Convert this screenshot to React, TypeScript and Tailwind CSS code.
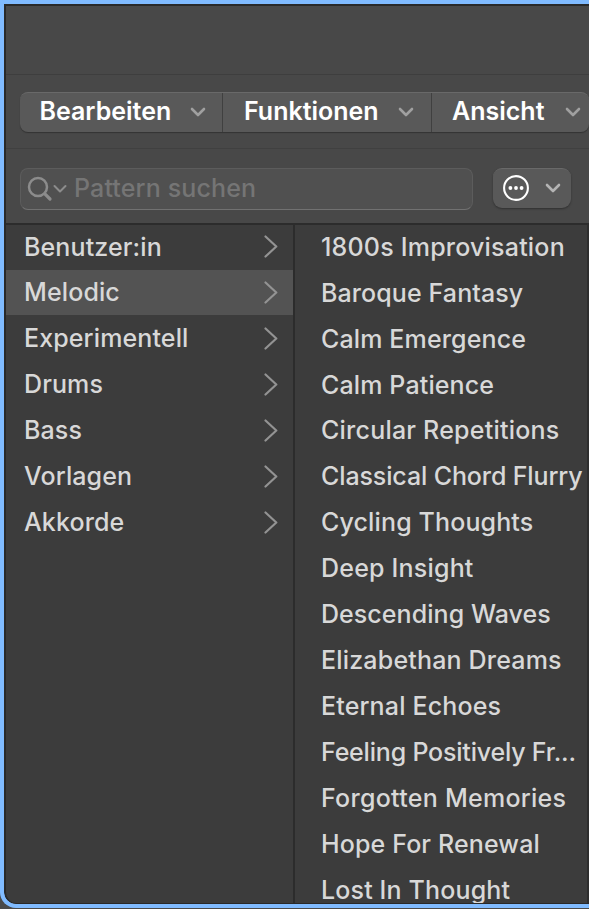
const menus = [
  { label: "Bearbeiten", box: "w-[203px] pl-[19.5px] border-r border-[#404040]", text: "w-[150.5px]" },
  { label: "Funktionen", box: "w-[209px] pl-[21px] border-r border-[#404040]", text: "w-[154px]" },
  { label: "Ansicht", box: "w-[158px] pl-[20px]", text: "w-[113px]" },
];

const categories = [
  "Benutzer:in",
  "Melodic",
  "Experimentell",
  "Drums",
  "Bass",
  "Vorlagen",
  "Akkorde",
];

const patterns = [
  { name: "1800s Improvisation", tracking: "tracking-[0.2px]" },
  { name: "Baroque Fantasy", tracking: "tracking-[0.1px]" },
  { name: "Calm Emergence", tracking: "tracking-[0.13px]" },
  { name: "Calm Patience", tracking: "tracking-[0.13px]" },
  { name: "Circular Repetitions", tracking: "tracking-[0.22px]" },
  { name: "Classical Chord Flurry", tracking: "tracking-[-0.12px]" },
  { name: "Cycling Thoughts", tracking: "tracking-[0.13px]" },
  { name: "Deep Insight", tracking: "tracking-[0.2px]" },
  { name: "Descending Waves", tracking: "tracking-[0.06px]" },
  { name: "Elizabethan Dreams", tracking: "tracking-[0.18px]" },
  { name: "Eternal Echoes", tracking: "tracking-[0.15px]" },
  { name: "Feeling Positively Fr...", tracking: "tracking-[-0.2px]" },
  { name: "Forgotten Memories", tracking: "tracking-[0.27px]" },
  { name: "Hope For Renewal", tracking: "tracking-[0.13px]" },
  { name: "Lost In Thought", tracking: "tracking-[0.15px]" },
];

function ChevronDown({ className }: { className: string }) {
  return (
    <svg width="16" height="10" viewBox="0 0 16 10" fill="none" stroke="currentColor" strokeWidth="2.6" strokeLinecap="round" strokeLinejoin="round" className={className}>
      <path d="M2 2l6 6 6-6" />
    </svg>
  );
}

function ChevronRight() {
  return (
    <svg width="14" height="24" viewBox="0 0 14 24" fill="none" stroke="#939393" strokeWidth="2.2" strokeLinecap="round" strokeLinejoin="round">
      <path d="M1.5 1.5L12.3 11.5 1.5 21.5" />
    </svg>
  );
}

export default function App() {
  return (
    <div className="h-[910px] w-[591px] overflow-hidden bg-white font-['Inter',sans-serif]">
      <div className="h-[909px] w-[589px] overflow-hidden bg-[#4a4a4a]">
        <div className="flex h-[908px] flex-col overflow-hidden rounded-bl-[16px] border-t-4 border-b-4 border-l-4 border-[#80bbff] bg-[#80bbff]">
          <div className="flex min-h-0 flex-1 flex-col overflow-hidden rounded-bl-[12px] border-t-2 border-b border-l-2 border-[#292929] bg-[#3c3c3c]">
            <div className="h-[69px] shrink-0 border-b border-[#3e3e3e] bg-[#484848]" />

            {/* Menu bar */}
            <div className="h-[74px] shrink-0 border-b border-[#404040] bg-[#484848] pt-[17px] pl-[14px]">
              <div className="flex h-10 w-[569px] overflow-hidden rounded-[8px] border-t border-[#696969] bg-[#595959] shadow-[0_1px_1px_#333]">
                {menus.map((m) => (
                  <div key={m.label} className={`flex shrink-0 items-center pb-px ${m.box}`}>
                    <span className={`shrink-0 text-[25px] font-semibold whitespace-nowrap text-white ${m.text}`}>
                      {m.label}
                    </span>
                    <ChevronDown className="text-[#a0a0a0]" />
                  </div>
                ))}
              </div>
            </div>

            {/* Search row */}
            <div className="flex h-[76px] shrink-0 border-b-2 border-[#2c2c2c] bg-[#484848] pt-[19px] pl-[14px]">
              <div className="flex h-[42px] w-[453px] items-center rounded-[8px] border border-t-[#5c5c5c] border-r-[#5c5c5c] border-b-[#717171] border-l-[#5c5c5c] bg-[#505050] pl-[6px]">
                <svg width="26" height="26" viewBox="0 0 26 26" fill="none" stroke="#8c8c8c" strokeLinecap="round">
                  <circle cx="11" cy="11" r="9" strokeWidth="2.5" />
                  <path d="M17.8 17.8l5.2 5.2" strokeWidth="3.2" />
                </svg>
                <svg width="14" height="10" viewBox="0 0 14 10" fill="none" stroke="#8c8c8c" strokeWidth="2" strokeLinecap="round" strokeLinejoin="round">
                  <path d="M1.5 2L7 7.5 12.5 2" />
                </svg>
                <span className="ml-[7px] text-[25px] font-medium tracking-[0.14px] whitespace-nowrap text-[#757575]">
                  Pattern suchen
                </span>
              </div>
              <div className="ml-5 flex h-10 w-[78px] items-center rounded-[9px] border-t border-[#696969] bg-[#595959] pb-px pl-[10px] shadow-[0_1px_2px_#303030]">
                <svg width="26" height="26" viewBox="0 0 26 26">
                  <circle cx="13" cy="13" r="11.9" fill="none" stroke="#fff" strokeWidth="2.1" />
                  <circle cx="7.4" cy="13" r="1.9" fill="#fff" />
                  <circle cx="13" cy="13" r="1.9" fill="#fff" />
                  <circle cx="18.6" cy="13" r="1.9" fill="#fff" />
                </svg>
                <ChevronDown className="ml-4 text-[#b4b4b4]" />
              </div>
            </div>

            {/* Browser columns */}
            <div className="flex min-h-0 flex-1 overflow-hidden border-r-2 border-[#2e2e2e]">
              <div className="w-[289px] shrink-0 border-r-2 border-[#2c2c2c]">
                {categories.map((c) => (
                  <div
                    key={c}
                    className={`flex h-[45.9px] items-center justify-between pt-[1.5px] pr-[15px] pl-[18px] text-[25px] font-medium tracking-[0.12px] text-[#d8d8d8] first:h-[44.5px] first:pt-0 ${
                      c === "Melodic" ? "bg-[#535353]" : ""
                    }`}
                  >
                    <span>{c}</span>
                    <ChevronRight />
                  </div>
                ))}
              </div>
              <div className="min-w-0 flex-1">
                {patterns.map((p) => (
                  <div
                    key={p.name}
                    className={`flex h-[45.93px] items-center pt-[2px] pl-[26px] text-[25px] font-medium whitespace-nowrap text-[#d8d8d8] first:h-[44.5px] first:pt-0 ${p.tracking}`}
                  >
                    {p.name}
                  </div>
                ))}
              </div>
            </div>
          </div>
        </div>
      </div>
    </div>
  );
}
